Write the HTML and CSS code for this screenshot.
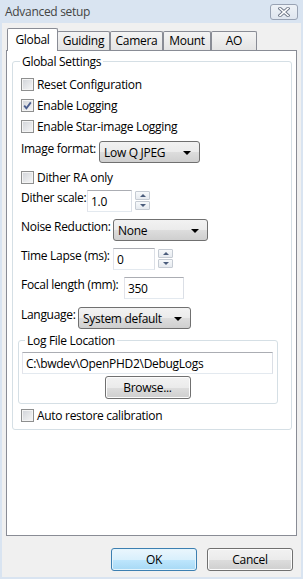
FILE: index.html
```html
<!DOCTYPE html>
<html lang="en">

<head>
    <meta charset="UTF-8">
    <meta name="viewport" content="width=device-width, initial-scale=1.0">
    <title>Advanced setup</title>
    <link rel="stylesheet" href="styles.css">
</head>

<body>
    <div class="dlg">
        <div class="titlebar">
            <span class="title">Advanced setup</span>
            <span class="close">
                <svg width="12" height="10" viewBox="0 0 12 10">
                    <path d="M2 1.5 L10 8.5 M10 1.5 L2 8.5" stroke="#6d7687" stroke-width="3.4" stroke-linecap="square" />
                    <path d="M2 1.5 L10 8.5 M10 1.5 L2 8.5" stroke="#fff" stroke-width="1.6" stroke-linecap="square" />
                </svg>
            </span>
        </div>

        <div class="client">
            <div class="tabs">
                <div class="tab active t-global">Global</div>
                <div class="tab t-guiding">Guiding</div>
                <div class="tab t-camera">Camera</div>
                <div class="tab t-mount">Mount</div>
                <div class="tab t-ao">AO</div>
            </div>

            <div class="page">
                <fieldset class="group main">
                    <legend>Global Settings</legend>

                    <label class="check"><span class="box"></span>Reset Configuration</label>
                    <label class="check"><span class="box">
                            <svg width="11" height="11" viewBox="0 0 11 11">
                                <path d="M2.2 5.6 L4.4 8.2 L8.8 2.4" fill="none" stroke="#4a5d8e" stroke-width="1.8" />
                            </svg>
                        </span>Enable Logging</label>
                    <label class="check"><span class="box"></span>Enable Star-image Logging</label>

                    <div class="row r-img">
                        <span class="lbl">Image format:</span>
                        <div class="combo c-img"><span>Low Q JPEG</span><i class="arrow"></i></div>
                    </div>

                    <label class="check r-dra"><span class="box"></span>Dither RA only</label>

                    <div class="row r-dscale">
                        <span class="lbl">Dither scale:</span>
                        <div class="edit e-dscale">1.0</div>
                        <div class="spin"><span class="up"></span><span class="down"></span></div>
                    </div>

                    <div class="row r-noise">
                        <span class="lbl">Noise Reduction:</span>
                        <div class="combo c-noise"><span>None</span><i class="arrow"></i></div>
                    </div>

                    <div class="row r-lapse">
                        <span class="lbl">Time Lapse (ms):</span>
                        <div class="edit e-lapse">0</div>
                        <div class="spin"><span class="up"></span><span class="down"></span></div>
                    </div>

                    <div class="row r-focal">
                        <span class="lbl">Focal length (mm):</span>
                        <div class="edit e-focal">350</div>
                    </div>

                    <div class="row r-lang">
                        <span class="lbl">Language:</span>
                        <div class="combo c-lang"><span>System default</span><i class="arrow"></i></div>
                    </div>

                    <fieldset class="group log">
                        <legend>Log File Location</legend>
                        <div class="edit e-path">C:\bwdev\OpenPHD2\DebugLogs</div>
                        <button class="btn browse" type="button">Browse...</button>
                    </fieldset>

                    <label class="check r-auto"><span class="box"></span>Auto restore calibration</label>
                </fieldset>
            </div>

            <div class="buttons">
                <button class="btn default" type="button">OK</button>
                <button class="btn" type="button">Cancel</button>
            </div>
        </div>
    </div>
</body>

</html>
```

FILE: styles.css
```css
* {
    box-sizing: border-box;
}

body {
    margin: 0;
    font-family: "Open Sans", "Liberation Sans", sans-serif;
    font-size: 12px;
    letter-spacing: -0.3px;
    color: #000;
    white-space: nowrap;
}

.dlg {
    width: 303px;
    height: 579px;
    display: flex;
    flex-direction: column;
    background: #d9e4f1;
    padding: 0 2px 2px;
}

.titlebar {
    height: 23px;
    display: flex;
    align-items: flex-start;
    justify-content: space-between;
    padding: 0 3px 0 3px;

    .title {
        margin-top: 3px;
        line-height: 17px;
        color: #444;
    }

    .close {
        margin-top: 4px;
        width: 28px;
        height: 16px;
        border: 1px solid #98a2b3;
        border-radius: 3px;
        background: linear-gradient(#eef2f7, #dfe6ef);
        display: flex;
        align-items: center;
        justify-content: center;
    }
}

.client {
    flex: 1;
    background: #f0f0f0;
    padding: 0 4px;
    display: flex;
    flex-direction: column;
}

.tabs {
    margin-top: 5px;
    margin-left: 1px;
    height: 22px;
    display: flex;
    align-items: flex-end;
}

.tab {
    height: 19px;
    border: 1px solid #898c95;
    border-bottom: none;
    background: linear-gradient(#f4f4f4, #e4e4e4);
    text-align: center;
    line-height: 16px;
    padding-top: 1px;
    border-radius: 2px 2px 0 0;
    flex: none;
}

.tab.active {
    height: 23px;
    margin-bottom: -1px;
    background: #fff;
    position: relative;
    z-index: 1;
    padding-top: 3px;
}

.t-global { width: 51px; }
.t-guiding { width: 53px; margin-left: -1px; }
.t-camera { width: 53px; }
.t-mount { width: 48px; }
.t-ao { width: 46px; }

.page {
    height: 486px;
    border: 1px solid #898c95;
    background: #fff;
    padding: 3px 4px 0 5px;
}

.group {
    margin: 0;
    border: 1px solid #d5dfe5;
    border-radius: 3px;
    min-width: 0;

    & legend {
        padding: 0 2px;
        line-height: 15px;
    }
}

.main {
    padding: 5px 8px 3px 8px;

    & legend {
        margin-left: -1px;
    }
}

.check {
    display: flex;
    align-items: center;
    height: 21px;

    .box {
        width: 13px;
        height: 13px;
        margin-right: 3px;
        border: 1px solid #8e8f8f;
        background: linear-gradient(135deg, #d0d3d8, #f7f7f7);
        box-shadow: inset 0 0 0 1px #f4f4f4;
        display: flex;
        align-items: center;
        justify-content: center;
    }
}

.row {
    display: flex;
    align-items: flex-start;

    .lbl {
        line-height: 16px;
        margin-top: 0;
        margin-right: 3px;
        flex: none;
    }
}

.combo {
    height: 22px;
    border: 1px solid #707070;
    border-radius: 3px;
    background: linear-gradient(#f2f2f2 0%, #ebebeb 50%, #dddddd 51%, #cfcfcf 100%);
    display: flex;
    align-items: center;
    justify-content: space-between;
    padding: 1px 8px 0 4px;

    .arrow {
        width: 0;
        height: 0;
        border-left: 4px solid transparent;
        border-right: 4px solid transparent;
        border-top: 4px solid #000;
    }
}

.edit {
    height: 22px;
    background: #fff;
    border: 1px solid;
    border-color: #abadb3 #dbdfe6 #e3e9ef #e2e3ea;
    padding: 2px 3px 0;
    line-height: 18px;
}

.spin {
    display: flex;
    flex-direction: column;
    gap: 1px;
    margin: 1px 0 0 3px;

    & span {
        width: 15px;
        height: 9px;
        border: 1px solid #c5cbd3;
        border-radius: 1px;
        background: linear-gradient(#f7f9fb, #e6eaef);
        display: flex;
        align-items: center;
        justify-content: center;
    }

    & span::after {
        content: "";
        border-left: 3px solid transparent;
        border-right: 3px solid transparent;
    }

    .up::after {
        border-bottom: 3px solid #4b5d7c;
    }

    .down::after {
        border-top: 3px solid #4b5d7c;
    }
}

.r-img {
    margin-top: 4px;

    .lbl { width: 75px; }
    .c-img { width: 101px; }
}

.r-dra {
    margin-top: 4px;
}

.r-dscale {
    margin-top: 2px;

    .lbl { width: 63px; }
    .e-dscale { width: 45px; }
}

.r-noise {
    margin-top: 7px;

    .lbl { width: 89px; }
    .c-noise { width: 95px; }
}

.r-lapse {
    margin-top: 7px;

    .lbl { width: 89px; }
    .e-lapse { width: 42px; }
}

.r-focal {
    margin-top: 7px;

    .lbl { width: 100px; }
    .e-focal { width: 60px; }
}

.r-lang {
    margin-top: 8px;

    .lbl { width: 54px; }
    .c-lang { width: 113px; }
}

.log {
    width: 260px;
    margin: 4px 0 0 -3px;
    padding: 4px 4px 4px 3px;
    display: flex;
    flex-direction: column;
    align-items: center;

    & legend {
        margin-left: 3px;
    }

    .e-path {
        width: 251px;
    }

    .browse {
        margin-top: 2px;
    }
}

.r-auto {
    margin-top: 1px;
}

.btn {
    font: inherit;
    letter-spacing: inherit;
    color: #000;
    width: 86px;
    height: 23px;
    padding: 0;
    border: 1px solid #707070;
    border-radius: 3px;
    background: linear-gradient(#f2f2f2 0%, #ebebeb 50%, #dddddd 51%, #cfcfcf 100%);
    box-shadow: inset 0 0 0 1px #fcfcfc;
}

.btn.default {
    border-color: #3c7fb1;
    background: linear-gradient(#eaf6fd 0%, #d9f0fc 50%, #bee6fd 51%, #a7d9f5 100%);
    box-shadow: inset 0 0 0 1px #e4f4fc;
}

.buttons {
    margin-top: 12px;
    display: flex;
    justify-content: flex-end;
    gap: 10px;
    padding-right: 4px;
}
```
